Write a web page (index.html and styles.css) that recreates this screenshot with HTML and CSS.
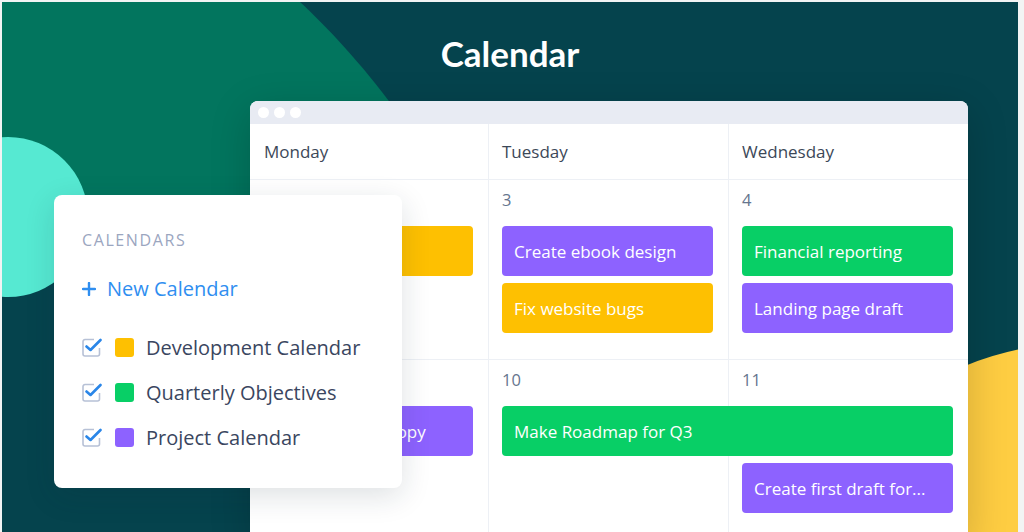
FILE: index.html
```html
<!DOCTYPE html>
<html lang="en">
<head>
    <meta charset="UTF-8">
    <meta name="viewport" content="width=device-width, initial-scale=1.0">
    <title>Calendar</title>
    <link rel="stylesheet" href="styles.css">
</head>
<body>
    <div class="scene">
        <!-- background blobs -->
        <svg class="blobs" width="1016" height="530" viewBox="0 0 1016 530">
            <path d="M0,0 H298 C322,22 360,62 392,106 L400,230 L0,230 Z" fill="#02755e"/>
            <circle cx="6" cy="215" r="80" fill="#56e9d2"/>
            <circle cx="1078" cy="642" r="301" fill="#fecd42"/>
        </svg>

        <h1 class="title">Calendar</h1>

        <div class="window">
            <div class="window-bar">
                <span class="dot"></span>
                <span class="dot"></span>
                <span class="dot"></span>
            </div>
            <div class="cal">
                <div class="day-head">Monday</div>
                <div class="day-head">Tuesday</div>
                <div class="day-head">Wednesday</div>

                <div class="week">
                    <div class="num"></div>
                    <div class="num">3</div>
                    <div class="num">4</div>
                    <div class="event yellow mon r2"></div>
                    <div class="event purple tue r2">Create ebook design</div>
                    <div class="event yellow tue r3">Fix website bugs</div>
                    <div class="event green wed r2">Financial reporting</div>
                    <div class="event purple wed r3">Landing page draft</div>
                </div>

                <div class="week">
                    <div class="num"></div>
                    <div class="num">10</div>
                    <div class="num">11</div>
                    <div class="event purple mon r2">Write website copy</div>
                    <div class="event green span2 r2">Make Roadmap for Q3</div>
                    <div class="event purple wed r3">Create first draft for...</div>
                </div>
            </div>
        </div>

        <div class="calendars">
            <div class="cal-title">Calendars</div>
            <div class="new-cal">
                <svg class="plus" width="14" height="14" viewBox="0 0 14 14">
                    <path d="M7 1 V13 M1 7 H13" stroke="#2f8ef0" stroke-width="2.4" stroke-linecap="round"/>
                </svg>
                New Calendar
            </div>
            <ul class="cal-list">
                <li class="cal-item">
                    <svg class="check" width="20" height="20" viewBox="0 0 20 20">
                        <path d="M12 2.5 H3 A2 2 0 0 0 1 4.5 V17 A2 2 0 0 0 3 19 H15.5 A2 2 0 0 0 17.5 17 V11" fill="none" stroke="#b7c1d6" stroke-width="1.6"/>
                        <path d="M4.5 9.5 L8.5 13 L18.5 3" fill="none" stroke="#2a86e8" stroke-width="2.6" stroke-linecap="round" stroke-linejoin="round"/>
                    </svg>
                    <span class="swatch yellow"></span>
                    Development Calendar
                </li>
                <li class="cal-item">
                    <svg class="check" width="20" height="20" viewBox="0 0 20 20">
                        <path d="M12 2.5 H3 A2 2 0 0 0 1 4.5 V17 A2 2 0 0 0 3 19 H15.5 A2 2 0 0 0 17.5 17 V11" fill="none" stroke="#b7c1d6" stroke-width="1.6"/>
                        <path d="M4.5 9.5 L8.5 13 L18.5 3" fill="none" stroke="#2a86e8" stroke-width="2.6" stroke-linecap="round" stroke-linejoin="round"/>
                    </svg>
                    <span class="swatch green"></span>
                    Quarterly Objectives
                </li>
                <li class="cal-item">
                    <svg class="check" width="20" height="20" viewBox="0 0 20 20">
                        <path d="M12 2.5 H3 A2 2 0 0 0 1 4.5 V17 A2 2 0 0 0 3 19 H15.5 A2 2 0 0 0 17.5 17 V11" fill="none" stroke="#b7c1d6" stroke-width="1.6"/>
                        <path d="M4.5 9.5 L8.5 13 L18.5 3" fill="none" stroke="#2a86e8" stroke-width="2.6" stroke-linecap="round" stroke-linejoin="round"/>
                    </svg>
                    <span class="swatch purple"></span>
                    Project Calendar
                </li>
            </ul>
        </div>
    </div>
</body>
</html>
```

FILE: styles.css
```css
body { margin: 0; background: #f2f4f4; font-family: "Open Sans", sans-serif; }
.scene { position: relative; z-index: 0; overflow: hidden; width: 1016px; height: 530px; margin: 2px 0 0 2px; background: #05434d; }
.blobs { position: absolute; left: 0; top: 0; z-index: -1; }

.title { margin: 0; padding-top: 29px; font: 700 35px/44px Lato, sans-serif; color: #fff; text-align: center; }

.window { width: 718px; margin: 26px 0 0 248px; background: #fff; border-radius: 8px 8px 0 0; overflow: hidden; box-shadow: 0 10px 40px rgba(0,0,0,.18); }
.window-bar { display: flex; align-items: center; gap: 5px; height: 23px; padding-left: 8px; background: #e8ebf3; }
.dot { width: 11px; height: 11px; border-radius: 50%; background: #fff; }

.cal { display: grid; grid-template-columns: 238px 240px 240px;
    background:
        linear-gradient(#edf0f5, #edf0f5) 238px 0 / 1px 100% no-repeat,
        linear-gradient(#edf0f5, #edf0f5) 478px 0 / 1px 100% no-repeat,
        #fff; }
.day-head { display: flex; align-items: center; height: 55px; padding-left: 14px; font-size: 17px; color: #3c4858; border-bottom: 1px solid #edf0f5; }

.week { grid-column: 1 / -1; display: grid; grid-template-columns: 238px 240px 240px; grid-template-rows: 29px 50px 50px; row-gap: 7px; align-content: start; box-sizing: border-box; height: 180px; padding-top: 10px; border-bottom: 1px solid #edf0f5; }
.num { padding-left: 14px; font-size: 16.5px; line-height: 20px; color: #65758e; }
.event { display: flex; align-items: center; margin: 0 15px 0 14px; padding-left: 12px; border-radius: 4px; color: #fff; font-size: 17px; white-space: nowrap; overflow: hidden; }
.mon { grid-column: 1; }
.tue { grid-column: 2; }
.wed { grid-column: 3; }
.span2 { grid-column: 2 / 4; }
.r2 { grid-row: 2; }
.r3 { grid-row: 3; }

.purple { background: #8d62ff; }
.yellow { background: #fec001; }
.green { background: #08cf66; }

.calendars { position: absolute; left: 52px; top: 193px; box-sizing: border-box; width: 348px; height: 293px; padding: 35px 28px 0; background: #fff; border-radius: 8px; box-shadow: 0 8px 30px rgba(20,40,60,.14); }
.cal-title { font-size: 16px; line-height: 20px; letter-spacing: 1.6px; text-transform: uppercase; color: #9ba6bf; }
.new-cal { display: flex; align-items: center; gap: 11px; margin-top: 26px; font-size: 20px; line-height: 26px; color: #2f8ef0; }
.cal-list { list-style: none; margin: 30px 0 0; padding: 0; display: flex; flex-direction: column; gap: 15px; }
.cal-item { display: flex; align-items: center; height: 30px; font-size: 20px; color: #3a4660; }
.check { margin-right: 13px; }
.swatch { width: 19px; height: 19px; border-radius: 3px; margin-right: 12px; }
```
